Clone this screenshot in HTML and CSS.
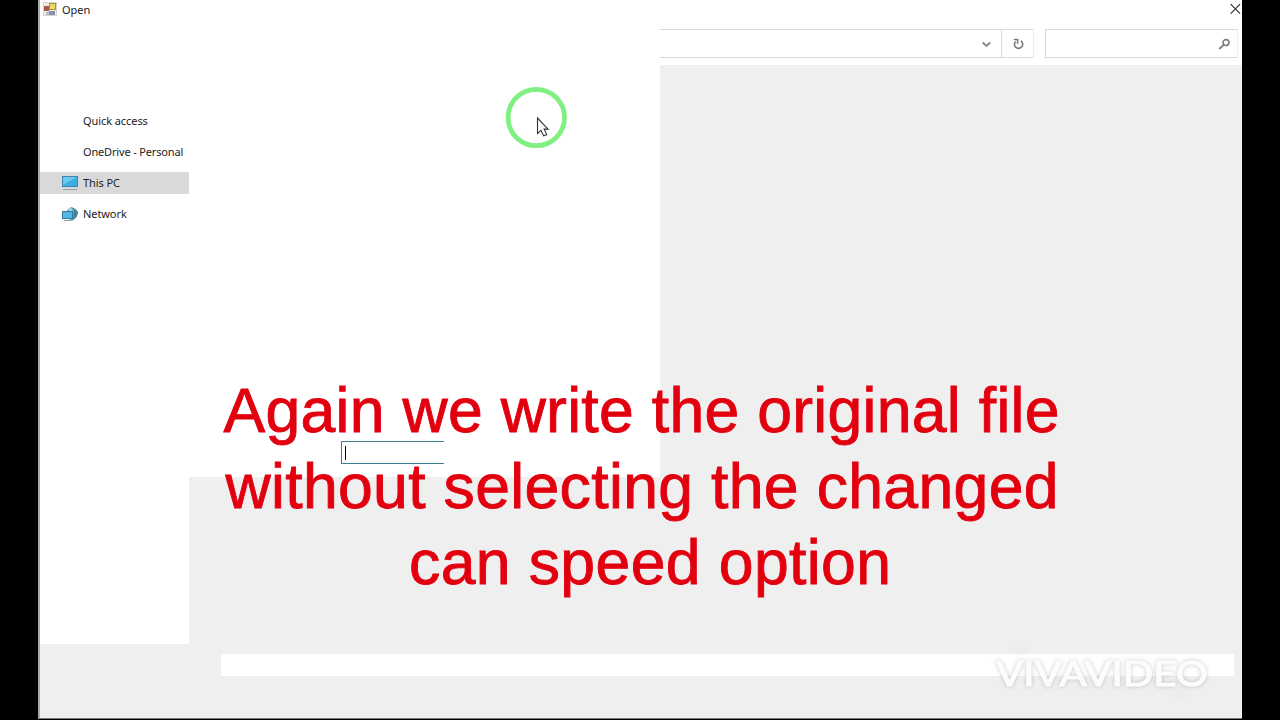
FILE: index.html
```html
<!DOCTYPE html>
<html lang="en">
<head>
<meta charset="utf-8">
<title>Open</title>
<link rel="stylesheet" href="styles.css">
</head>
<body>
<main class="stage">
  <section class="dialog">
    <header class="titlebar">
      <svg class="app-icon" width="14" height="14" viewBox="0 0 14 14">
        <rect x=".5" y=".5" width="13" height="13" fill="#eeeae4" stroke="#d8d5d0"/>
        <rect x="1" y="4" width="5" height="5" fill="#a65b50"/>
        <rect x="3" y="10" width="3" height="3" fill="#bcbcbc"/>
        <rect x="6" y="9" width="6" height="4" fill="#8490b4"/>
        <rect x="6.5" y="1.5" width="6" height="6" fill="#f0d765" stroke="#aa9134"/>
      </svg>
      <h1 class="title">Open</h1>
      <svg class="close" width="12" height="12" viewBox="0 0 12 12"><path d="M1.7 1.2l9.4 9.4M11.1 1.2L1.7 10.6" fill="none" stroke="#333" stroke-width="1.2"/></svg>
    </header>
    <nav class="toolbar">
      <div class="address">
        <svg class="chevron" width="10" height="8" viewBox="0 0 10 8"><path d="M1.7 2.5L5.5 6 9.3 2.5" fill="none" stroke="#8a8a8a" stroke-width="2"/></svg>
        <div class="refresh"><svg width="12" height="12" viewBox="0 0 12 12"><path d="M9 3A4.1 4.1 0 1 1 3.6 3.5M1.8 1.5h3.8v4.2" fill="none" stroke="#7c7c7c" stroke-width="1.6"/></svg></div>
      </div>
      <div class="search"><svg width="12" height="12" viewBox="0 0 12 12"><circle cx="8" cy="4.6" r="3" fill="none" stroke="#808080" stroke-width="1.7"/><path d="M5.8 6.8L1.2 11" stroke="#808080" stroke-width="1.9"/></svg></div>
    </nav>
    <div class="content">
      <aside class="sidebar">
        <div class="place"><span class="icon"></span><span class="label quick">Quick access</span></div>
        <div class="place"><span class="icon"></span><span class="label drive">OneDrive - Personal</span></div>
        <div class="place selected">
          <svg class="icon" width="16" height="16" viewBox="0 0 16 16"><rect x=".5" y="1.5" width="15" height="10" fill="#39aee2" stroke="#3b86aa"/><path d="M1 2h14L1 10z" fill="#6bcaf0"/><path d="M1 14.5h14" stroke="#8aa6b1"/></svg>
          <span class="label">This PC</span>
        </div>
        <div class="place">
          <svg class="icon" width="16" height="16" viewBox="0 0 16 16"><path d="M5 4L9 1l5 2 2 4-2 5-4 3-5-3z" fill="#6caabd"/><path d="M10 1l2 4-1 9 4-4 1-4z" fill="#43819a"/><path d="M6 3l3-1 2 3-3 1z" fill="#a6dbcd"/><rect x=".5" y="5.5" width="10" height="7" fill="#52b9e7" stroke="#337b9f"/><path d="M2 14.5h7" stroke="#8ba4b2"/></svg>
          <span class="label network">Network</span>
        </div>
      </aside>
      <div class="file-list"></div>
    </div>
    <footer class="footer"><div class="filename"></div></footer>
  </section>

  <div class="edit-box"><span class="caret"></span></div>

  <svg class="pointer" width="64" height="64" viewBox="0 0 64 64">
    <circle cx="32.3" cy="32.5" r="28.2" fill="none" stroke="#82ef82" stroke-width="4.8"/>
    <path d="M33.5 33v15.5l3.5-3.2 2.7 5.6 3-1.3-2.6-5.5h3.9z" fill="#fff" stroke="#333" stroke-width="1.1"/>
  </svg>

  <svg class="caption" width="1280" height="240" viewBox="0 370 1280 240">
    <text x="223.5" y="432" textLength="836">Again we write the original file</text>
    <text x="225.5" y="508" textLength="833">without selecting the changed</text>
    <text x="409" y="584" textLength="482">can speed option</text>
  </svg>

  <svg class="watermark" width="230" height="70" viewBox="990 640 230 70">
    <text x="996" y="686" textLength="212" lengthAdjust="spacingAndGlyphs">VIVAVIDEO</text>
    <circle cx="1022" cy="649" r="4"/>
    <circle cx="1180" cy="693" r="4"/>
  </svg>
</main>
</body>
</html>
```
FILE: styles.css
```css
* { box-sizing: border-box; }
body { margin: 0; background: #000; font-family: "Noto Sans", "Open Sans", sans-serif; }
.stage { position: relative; width: 1280px; height: 720px; overflow: hidden; padding-left: 38px; background: #000; }
.dialog { display: flex; flex-direction: column; width: 1204px; height: 719px; background: #efefef; border-left: 2px solid #aaa; border-bottom: 1px solid #777; }
.titlebar { display: flex; align-items: center; height: 20px; flex: none; padding: 0 1px 2px 3px; background: #fff; }
.title { margin: 1px 0 0 5px; font-size: 11px; font-weight: 400; line-height: 18px; color: #222; }
.close { margin-left: auto; }
.toolbar { display: flex; align-items: flex-start; justify-content: flex-end; flex: none; height: 45px; padding: 9px 4px 0 0; background: #fff; gap: 11px; }
.address { display: flex; align-items: center; justify-content: flex-end; width: 374px; height: 29px; border: 1px solid #d9d9d9; border-left: 0; border-right-color: #eee; }
.chevron { margin-right: 10px; }
.refresh { display: flex; align-items: center; justify-content: center; width: 32px; height: 27px; border-left: 1px solid #d9d9d9; }
.search { display: flex; align-items: center; justify-content: flex-end; width: 193px; height: 29px; padding-right: 7px; border: 1px solid #d9d9d9; border-right-color: #eee; }
.content { display: flex; align-items: flex-start; height: 579px; flex: none; }
.sidebar { display: flex; flex-direction: column; gap: 8px; width: 149px; height: 579px; padding-top: 45px; background: #fff; }
.place { display: flex; align-items: center; gap: 5px; height: 22.8px; padding-left: 22px; white-space: nowrap; }
.selected { background: #d9d9d9; }
.icon { width: 16px; height: 16px; flex: none; }
.label { font-size: 11px; line-height: 20px; color: #222; letter-spacing: -.08px; }
.drive { letter-spacing: -.16px; }
.file-list { width: 471px; height: 412px; background: #fff; }
.footer { flex: 1; padding: 10px 8px 0 181px; }
.filename { height: 22px; background: #fff; }
.edit-box { position: absolute; left: 341px; top: 441px; width: 103px; height: 23px; padding: 4px 3px; border: 1px solid #3c7f93; border-right: 0; background: #fff; }
.caret { display: block; width: 1px; height: 14px; background: #000; }
.pointer { position: absolute; left: 504px; top: 85px; }
.caption { position: absolute; left: 0; top: 370px; }
.caption text { font-family: "Liberation Sans", sans-serif; font-size: 62.5px; fill: #e2000f; stroke: #e2000f; stroke-width: .9px; }
.watermark { position: absolute; left: 990px; top: 640px; filter: drop-shadow(0 0 2px rgba(0, 0, 0, .2)); }
.watermark text { font-family: Lato, sans-serif; font-size: 34px; fill: #fcfcfc; stroke: #fcfcfc; stroke-width: 1.2px; }
.watermark circle { fill: #fff; opacity: .45; filter: blur(2px); }
```
